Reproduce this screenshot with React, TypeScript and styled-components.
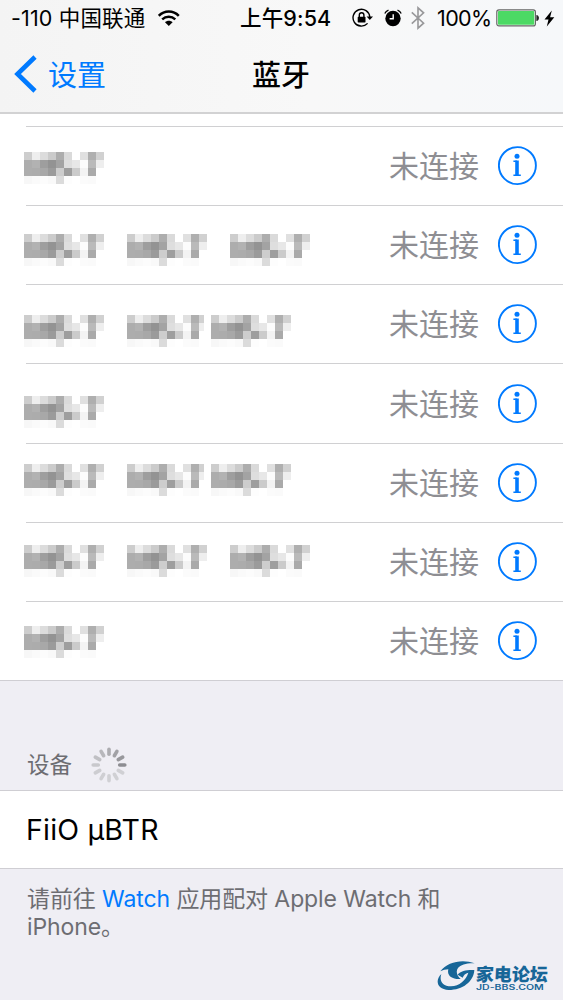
import React from "react";
import styled, { createGlobalStyle } from "styled-components";

const latin = `Inter, "Noto Sans CJK SC", sans-serif`;

const GlobalStyle = createGlobalStyle`
  body {
    margin: 0;
    background: #efeef4;
    font-family: ${latin};
    color: #000;
  }
`;

const Screen = styled.main`
  width: 563px;
  height: 1000px;
  overflow: hidden;
  display: flex;
  flex-direction: column;
  background: #efeef4;
`;

const Header = styled.header`
  height: 112px;
  flex: none;
  background: linear-gradient(90deg, #f4f4f4 0%, #f8f8f8 55%, #f6f8fa 100%);
  border-bottom: 2px solid #d2d2d3;
`;

const StatusBar = styled.div`
  height: 36px;
  display: flex;
  align-items: center;
  padding-left: 11px;
`;

const Slot = styled.div<{ $w: number }>`
  width: ${(p) => p.$w}px;
  flex: none;
  display: flex;
  align-items: center;
`;

const StatusText = styled.span<{ $weight?: number; $spacing?: number }>`
  font-size: 21.5px;
  line-height: 36px;
  white-space: pre;
  font-weight: ${(p) => p.$weight ?? 400};
  letter-spacing: ${(p) => p.$spacing ?? 0}px;
`;

const NavBar = styled.nav`
  height: 76px;
  display: grid;
  grid-template-columns: 1fr auto 1fr;
  align-items: center;
`;

const Back = styled.div`
  display: flex;
  align-items: center;
  gap: 11px;
  padding-left: 14px;
  color: #007aff;
  font-size: 29px;
`;

const BackLabel = styled.span`
  line-height: 72px;
  padding-top: 4px;
`;

const Title = styled.h1`
  margin: 0 1px 0 0;
  padding-top: 4px;
  font-size: 29px;
  font-weight: 500;
  line-height: 72px;
`;

const List = styled.section`
  flex: none;
  background: #fff;
  padding-top: 12px;
`;

const Divider = styled.div<{ $full?: boolean }>`
  height: 1px;
  margin-left: ${(p) => (p.$full ? 0 : 26)}px;
  background: ${(p) => (p.$full ? "#cfced3" : "#d0d0d2")};
`;

const Row = styled.div<{ $h: number }>`
  height: ${(p) => p.$h}px;
  display: flex;
  align-items: center;
  padding-right: 26px;
`;

const Names = styled.div<{ $top: number }>`
  flex: 1;
  align-self: stretch;
  display: flex;
  align-items: flex-start;
  padding: ${(p) => p.$top}px 0 0 24px;
`;

const State = styled.span`
  font-size: 30px;
  line-height: 78px;
  color: #8e8e93;
  margin-right: 19px;
`;

const SectionHeader = styled.div`
  height: 109px;
  flex: none;
  box-sizing: border-box;
  padding: 63px 0 0 27px;
  display: flex;
  align-items: flex-start;
  gap: 19px;
  font-size: 22.5px;
  line-height: 42px;
  color: #6d6d72;
`;

const SpinnerBox = styled.svg`
  margin-top: 3px;
`;

const DeviceRow = styled.div`
  height: 77px;
  flex: none;
  background: #fff;
  padding-left: 26px;
  font-size: 28.5px;
  line-height: 78px;
  letter-spacing: 0.2px;
`;

const Footnote = styled.p`
  margin: 0;
  padding: 16px 0 0 27px;
  font-size: 23px;
  line-height: 28px;
  color: #6d6d72;
  letter-spacing: -0.1px;
`;

const Link = styled.span`
  color: #007aff;
`;

const Brand = styled.footer`
  margin-top: auto;
  height: 39px;
  display: flex;
  padding-left: 436px;
  color: #176698;
`;

const BrandText = styled.div`
  display: flex;
  flex-direction: column;
  margin: 2px 0 0 1px;
`;

const BrandName = styled.span`
  font: 900 18px/21px "Noto Sans CJK SC", sans-serif;
  transform: skewX(-3deg);
  white-space: nowrap;
`;

const BrandUrl = styled.span`
  font: 600 7.3px/7px Inter, sans-serif;
  transform: scaleX(1.44);
  transform-origin: left;
  white-space: nowrap;
`;

const shades = [
  [205, 238, 220, 203, 173, 218, 255, 224, 175, 209],
  [173, 178, 158, 147, 163, 222, 231, 252, 186, 238],
  [173, 172, 168, 155, 205, 158, 203, 243, 170, 255],
  [247, 250, 252, 249, 219, 253, 255, 251, 250, 255],
];

const Mosaic = ({ width, gap }: { width: number; gap: number }) => (
  <svg
    width={width + gap}
    height="32"
    viewBox={`0 0 ${width + gap} 32`}
    shapeRendering="crispEdges"
  >
    {shades.map((line, y) =>
      line.map((v, x) => (
        <rect
          key={`${x}-${y}`}
          x={x * 8}
          y={y * 8}
          width={Math.min(8, width - x * 8)}
          height="8"
          fill={`rgb(${v},${v},${v})`}
        />
      ))
    )}
  </svg>
);

const InfoIcon = () => (
  <svg width="39" height="40" viewBox="0 0 39 40" fill="none">
    <circle cx="19.4" cy="19.6" r="18.5" stroke="#007aff" strokeWidth="1.9" />
    <circle cx="19" cy="10.2" r="2.5" fill="#007aff" />
    <path d="M15.4 15.2H19M15.4 29.2H22.8" stroke="#007aff" strokeWidth="1.4" />
    <path d="M19 14.5V29.5" stroke="#007aff" strokeWidth="3.6" />
  </svg>
);

const WifiIcon = () => (
  <svg width="22" height="17" viewBox="0 0 22 17" fill="none" stroke="#000">
    <path d="M.8 5.8C6.4 .1 15.2 .1 20.8 5.8" strokeWidth="2.5" />
    <path d="M4.2 9.3C7.9 5.8 13.6 5.8 17.3 9.3" strokeWidth="2.4" />
    <path d="M7 12.2C9.2 10.2 12.4 10.2 14.6 12.2L10.8 16Z" fill="#000" stroke="none" />
  </svg>
);

const LockIcon = () => (
  <svg width="21" height="20" viewBox="0 0 21 20" fill="none" stroke="#000">
    <path d="M15.6 15.4A8.4 8.4 0 1 1 17.8 9" strokeWidth="1.4" />
    <path d="M14.6 8.5H21L17.8 12Z" fill="#000" stroke="none" />
    <rect x="5.7" y="8.8" width="7.8" height="5.6" rx=".6" fill="#000" stroke="none" />
    <path d="M7.3 9V7.1a2.3 2.3 0 0 1 4.6 0V9" strokeWidth="1.4" />
  </svg>
);

const AlarmIcon = () => (
  <svg width="18" height="18" viewBox="0 0 18 18" fill="none">
    <circle cx="9" cy="9.5" r="7.7" fill="#000" />
    <path d="M9.2 5.3V9.8H5.6" stroke="#fff" strokeWidth="1.4" />
    <path d="M.8 4.5C1.5 2.8 2.7 1.7 4.5 1.1M17.2 4.5C16.5 2.8 15.3 1.7 13.5 1.1" stroke="#000" strokeWidth="1.3" />
  </svg>
);

const BluetoothIcon = () => (
  <svg width="14" height="24" viewBox="0 0 14 24" fill="none" stroke="#98989a" strokeWidth="1.6">
    <path d="M.8 6.3L12.6 17.2L7 22.2V1.8L12.6 6.8L.8 17.7" />
  </svg>
);

const BatteryIcon = () => (
  <svg width="44" height="18" viewBox="0 0 44 18">
    <rect x=".8" y=".9" width="38.6" height="16" rx="2.2" fill="#f8fff8" stroke="#666" strokeWidth="1.2" />
    <rect x="2" y="2.1" width="36.2" height="13.6" rx=".8" fill="#4cd964" />
    <path d="M40.4 6C43.8 6 43.8 12 40.4 12Z" fill="#222" />
  </svg>
);

const BoltIcon = () => (
  <svg width="11" height="17" viewBox="0 0 11 17">
    <path d="M7.8 .5L.5 9.4H4.5L2.8 16.5L10.3 7.2H6.1Z" fill="#000" />
  </svg>
);

const Chevron = () => (
  <svg width="23" height="38" viewBox="0 0 23 38" fill="none">
    <path d="M21 2L3.5 19L21 36" stroke="#007aff" strokeWidth="4.6" />
  </svg>
);

const spokes = [
  "#8d8d92", "#98989c", "#a2a2a6", "#acacb0", "#b7b7bb", "#c0c0c4",
  "#c8c8cc", "#cdcdd1", "#cfcfd3", "#d0d0d4", "#d0d0d4", "#d0d0d4",
];

const Spinner = () => (
  <SpinnerBox width="36" height="36" viewBox="-18 -18 36 36">
    {spokes.map((color, i) => (
      <line
        key={i}
        x1="10.7"
        x2="15.8"
        y1="0"
        y2="0"
        stroke={color}
        strokeWidth="3.6"
        strokeLinecap="round"
        transform={`rotate(${-30 * i})`}
      />
    ))}
  </SpinnerBox>
);

const BrandMark = () => (
  <svg width="39" height="30" viewBox="18 18 117 90" fill="#176698">
    <path d="M31 49C52 20 98 12 134 25C110 24 92 29 84 39C77 48 80 62 92 72C66 74 50 62 55 43C47 43 38 45 31 49Z" />
    <path d="M34 57C14 76 21 104 56 105C98 105 131 80 133 45C112 44 92 47 83 59L98 68C101 60 106 55 115 53C108 76 88 93 63 94C37 94 27 77 34 57Z" />
  </svg>
);

type Device = { top: number; height: number; names: [number, number][] };

const devices: Device[] = [
  { top: 25, height: 78, names: [[80, 0]] },
  { top: 28, height: 78, names: [[80, 23], [80, 23], [80, 0]] },
  { top: 30, height: 78, names: [[80, 23], [77, 7], [80, 0]] },
  { top: 32, height: 79, names: [[80, 0]] },
  { top: 20, height: 78, names: [[80, 23], [77, 7], [80, 0]] },
  { top: 22, height: 78, names: [[80, 23], [80, 23], [80, 0]] },
  { top: 24, height: 78, names: [[80, 0]] },
];

export default function App() {
  return (
    <>
      <GlobalStyle />
      <Screen>
        <Header>
          <StatusBar>
            <Slot $w={147}>
              <StatusText $spacing={0.15}>-110 中国联通</StatusText>
            </Slot>
            <Slot $w={82}><WifiIcon /></Slot>
            <Slot $w={112}>
              <StatusText $weight={500} $spacing={0.15}>上午9:54</StatusText>
            </Slot>
            <Slot $w={32}><LockIcon /></Slot>
            <Slot $w={27}><AlarmIcon /></Slot>
            <Slot $w={26}><BluetoothIcon /></Slot>
            <Slot $w={59}>
              <StatusText $spacing={-0.6}>100%</StatusText>
            </Slot>
            <Slot $w={48}><BatteryIcon /></Slot>
            <BoltIcon />
          </StatusBar>
          <NavBar>
            <Back>
              <Chevron />
              <BackLabel>设置</BackLabel>
            </Back>
            <Title>蓝牙</Title>
          </NavBar>
        </Header>
        <List>
          <Divider />
          {devices.map((d, i) => (
            <React.Fragment key={i}>
              <Row $h={d.height}>
                <Names $top={d.top}>
                  {d.names.map(([width, gap], n) => (
                    <Mosaic key={n} width={width} gap={gap} />
                  ))}
                </Names>
                <State>未连接</State>
                <InfoIcon />
              </Row>
              <Divider $full={i === devices.length - 1} />
            </React.Fragment>
          ))}
        </List>
        <SectionHeader>
          设备
          <Spinner />
        </SectionHeader>
        <Divider $full />
        <DeviceRow>FiiO μBTR</DeviceRow>
        <Divider $full />
        <Footnote>
          请前往 <Link>Watch</Link> 应用配对 Apple Watch 和<br />iPhone。
        </Footnote>
        <Brand>
          <BrandMark />
          <BrandText>
            <BrandName>家电论坛</BrandName>
            <BrandUrl>JD-BBS.COM</BrandUrl>
          </BrandText>
        </Brand>
      </Screen>
    </>
  );
}
